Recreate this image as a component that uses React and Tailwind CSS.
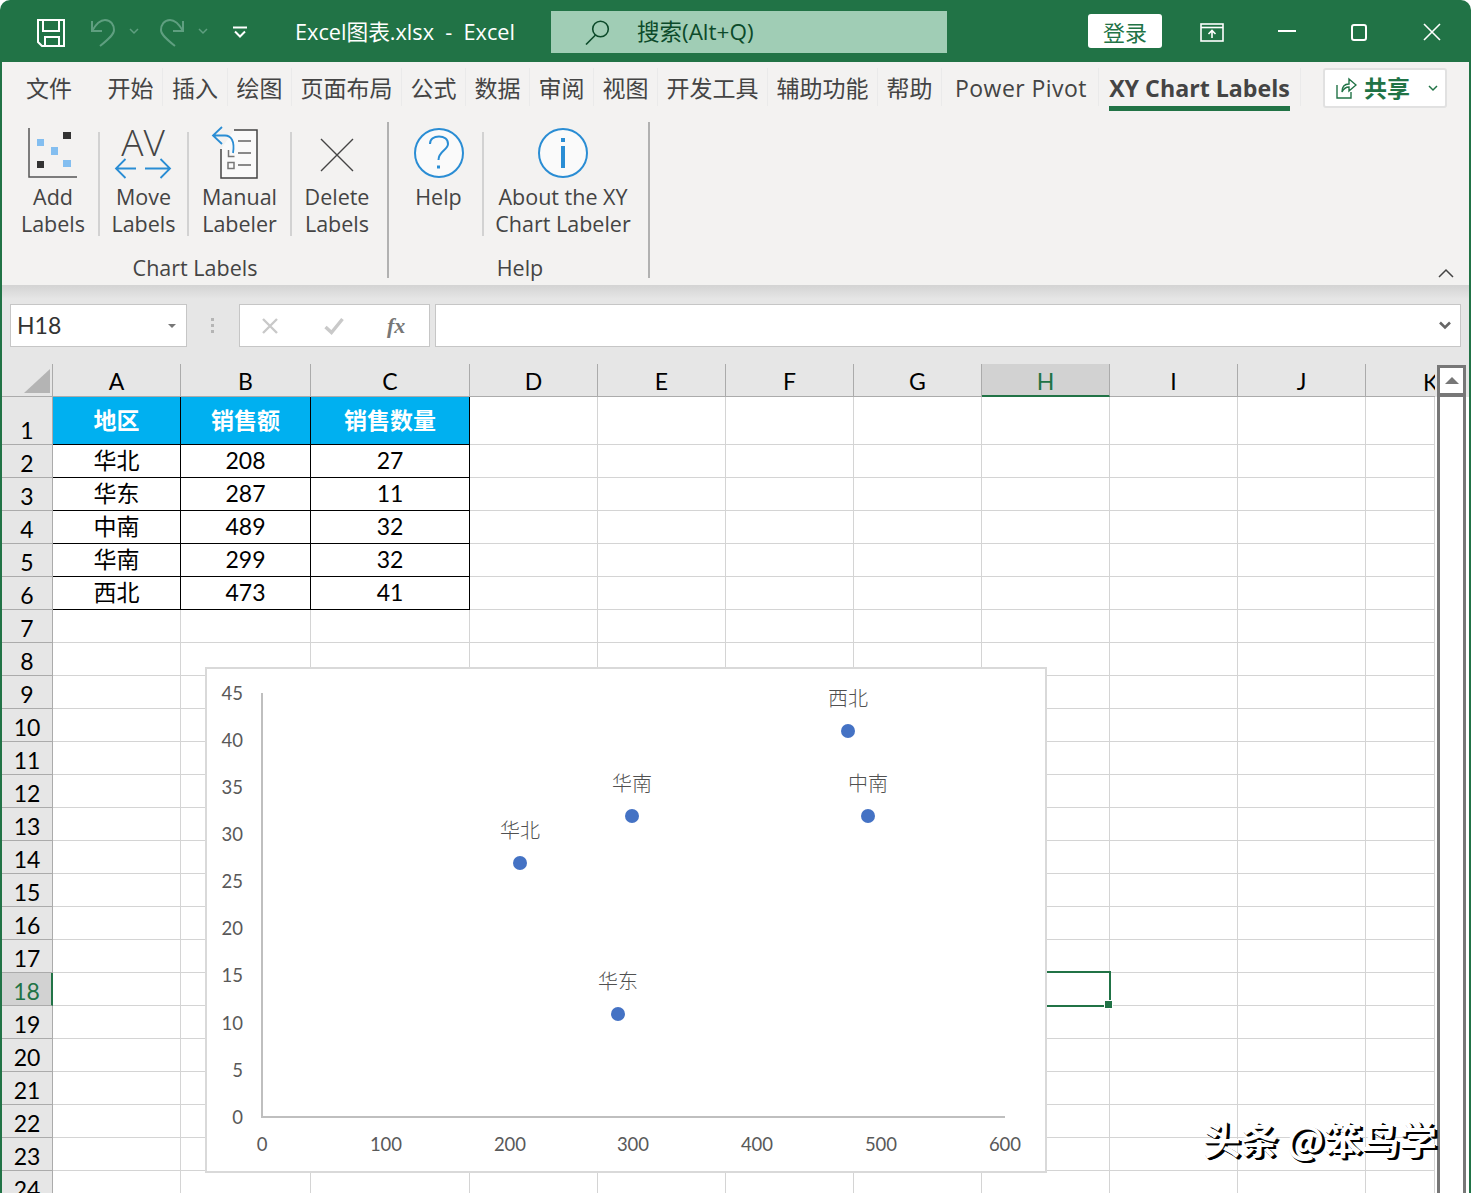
import React from "react";

const green = "#217346";

const tabs = [
  ["文件", "w-[97px] pr-[3px]"],
  ["开始", "w-[64px] border-r"],
  ["插入", "w-[65px] border-r"],
  ["绘图", "w-[64px] border-r"],
  ["页面布局", "w-[110px] border-r"],
  ["公式", "w-[64px] border-r"],
  ["数据", "w-[64px] border-r"],
  ["审阅", "w-[64px] border-r"],
  ["视图", "w-[64px] border-r"],
  ["开发工具", "w-[110px] border-r"],
  ["辅助功能", "w-[110px] border-r"],
  ["帮助", "w-[64px] border-r"],
  ["Power Pivot", "w-[157px] border-r pl-[2px] tracking-[0.45px]"],
];

const columns = ["A", "B", "C", "D", "E", "F", "G", "H", "I", "J", "K"];

const tableRows = [
  ["地区", "销售额", "销售数量"],
  ["华北", "208", "27"],
  ["华东", "287", "11"],
  ["中南", "489", "32"],
  ["华南", "299", "32"],
  ["西北", "473", "41"],
];

const rowNumbers = Array.from({ length: 24 }, (_, i) => i + 1);

const yTicks = [
  ["45", 693],
  ["40", 740],
  ["35", 787],
  ["30", 834],
  ["25", 881],
  ["20", 928],
  ["15", 975],
  ["10", 1023],
  ["5", 1070],
  ["0", 1117],
];

const xTicks = [
  ["0", 262],
  ["100", 386],
  ["200", 510],
  ["300", 633],
  ["400", 757],
  ["500", 881],
  ["600", 1005],
];

const points = [
  ["华北", 520, 863],
  ["华东", 618, 1014],
  ["中南", 868, 816],
  ["华南", 632, 816],
  ["西北", 848, 731],
];

const Sep = () => <div className="mt-[16px] h-[104px] w-[2px] shrink-0 bg-[#d2d2d2]"></div>;
const GroupSep = () => <div className="mt-[6px] h-[156px] w-[2px] shrink-0 bg-[#b1b1b1]"></div>;

const RibbonButton = ({ width, icon, lines }) => (
  <div className={`${width} flex shrink-0 flex-col items-center`}>
    <div className="flex h-[67px] w-full justify-center pt-[10px]">{icon}</div>
    {lines.map((l) => (
      <div key={l} className="whitespace-nowrap text-[21.5px] leading-[27px] text-[#444444]">
        {l}
      </div>
    ))}
  </div>
);

const TitleBar = () => (
  <div className="flex h-[62px] shrink-0 items-center pl-[37px] pt-[2px]">
    <svg width="28" height="28" viewBox="0 0 28 28" fill="none" stroke="white" strokeWidth="2" className="mt-[2px] shrink-0">
      <path d="M1 1H27V27H5L1 23Z" />
      <path d="M6 1V12H22V1" />
      <path d="M8 27V18H22V27" />
    </svg>
    <svg width="25" height="28" viewBox="0 0 25 28" fill="none" stroke="#5f9f80" strokeWidth="2" className="ml-[25px] mt-[2px] shrink-0">
      <path d="M2 2V12H12" />
      <path d="M2 12C6 5 10 1 15 1C21 1 24 6 24 11C24 15 20 19 10 27" />
    </svg>
    <svg width="12" height="8" viewBox="0 0 12 8" fill="none" stroke="#5f9f80" strokeWidth="1.5" className="ml-[13px] shrink-0">
      <path d="M2 1L6 5L10 1" />
    </svg>
    <svg width="26" height="28" viewBox="0 0 26 28" fill="none" stroke="#5f9f80" strokeWidth="2" className="ml-[19px] mt-[2px] shrink-0">
      <path d="M24 2V12H14" />
      <path d="M24 12C20 5 16 1 11 1C5 1 2 6 2 11C2 15 6 19 16 27" />
    </svg>
    <svg width="12" height="8" viewBox="0 0 12 8" fill="none" stroke="#5f9f80" strokeWidth="1.5" className="ml-[12px] shrink-0">
      <path d="M2 1L6 5L10 1" />
    </svg>
    <svg width="14" height="13" viewBox="0 0 14 13" fill="none" stroke="white" strokeWidth="2" className="ml-[24px] shrink-0">
      <path d="M0 1.5H14" />
      <path d="M2 5.5L7 10.5L12 5.5" />
    </svg>
    <div className="ml-[48px] w-[256px] shrink-0 whitespace-pre text-[21.7px] text-white">Excel图表.xlsx  -  Excel</div>
    <div className="flex h-[42px] w-[396px] shrink-0 items-center bg-[#a0cdb5] pl-[34px] text-[22.5px] text-[#0c4a2a]">
      <svg width="25" height="25" viewBox="0 0 25 25" fill="none" stroke="#0c4a2a" strokeWidth="1.6">
        <circle cx="15.5" cy="9" r="7.8" />
        <path d="M10.5 15L1 24.5" />
      </svg>
      <span className="ml-[27px]">搜索(Alt+Q)</span>
    </div>
    <div className="mb-[2px] ml-[141px] flex h-[34px] w-[74px] shrink-0 items-center justify-center rounded-[3px] bg-white pt-[2px] text-[22px] text-[#217346]">
      登录
    </div>
    <svg width="24" height="19" viewBox="0 0 24 19" fill="none" stroke="white" strokeWidth="1.6" className="ml-[38px] shrink-0">
      <rect x="1" y="1" width="22" height="17" />
      <path d="M1 4.5H23" />
      <path d="M12 15V7.5M8.5 11L12 7.5L15.5 11" />
    </svg>
    <div className="mb-[2px] ml-[54px] h-[2px] w-[18px] shrink-0 bg-white"></div>
    <div className="ml-[55px] h-[17px] w-[16px] shrink-0 rounded-[3px] border-2 border-white"></div>
    <svg width="18" height="18" viewBox="0 0 18 18" fill="none" stroke="white" strokeWidth="1.6" className="ml-[56px] shrink-0">
      <path d="M1 1L17 17M17 1L1 17" />
    </svg>
  </div>
);

const TabBar = () => (
  <div className="flex h-[54px] shrink-0 items-start pt-[6px]">
    {tabs.map(([label, cls]) => (
      <div key={label} className={`${cls} h-[38px] shrink-0 whitespace-nowrap border-[#eaeaea] pt-[2px] text-center text-[23px] leading-[36px] text-[#444444]`}>
        {label}
      </div>
    ))}
    <div className="flex h-[38px] w-[202px] shrink-0 flex-col items-center border-r border-[#eaeaea]">
      <div className="whitespace-nowrap pt-[2px] text-[23.2px] font-bold leading-[36px] text-[#444444]">XY Chart Labels</div>
      <div className="h-[5px] w-[181px] shrink-0 bg-[#217346]"></div>
    </div>
    <div className="ml-[22px] flex h-[40px] w-[124px] shrink-0 items-center rounded-[3px] border-2 border-[#e1e1e1] bg-white pl-[11px]">
      <svg width="21" height="22" viewBox="0 0 21 22" fill="none" stroke={green} strokeWidth="1.4">
        <path d="M1 8V21H15V15" />
        <path d="M6 15C6 9 9 7 13 7V2L20 8L13 14V10C10 10 8 11 6 15Z" />
      </svg>
      <span className="ml-[7px] text-[23px] font-bold text-[#217346]">共享</span>
      <svg width="10" height="7" viewBox="0 0 10 7" fill="none" stroke={green} strokeWidth="1.5" className="ml-[18px]">
        <path d="M1 1L5 5L9 1" />
      </svg>
    </div>
  </div>
);

const Ribbon = () => (
  <div className="relative flex h-[169px] shrink-0">
    <div className="flex w-[385px] shrink-0 flex-col">
      <div className="flex h-[136px] pl-[6px]">
        <RibbonButton
          width="w-[90px]"
          lines={["Add", "Labels"]}
          icon={
            <svg width="50" height="51" viewBox="28 127 50 51" className="mt-[1px]">
              <path d="M29 128V177H77" fill="none" stroke="#555555" strokeWidth="1.5" />
              <rect x="63" y="132" width="8" height="7" fill="#333333" />
              <rect x="37" y="139" width="7" height="7" fill="#83bef0" />
              <rect x="51" y="147" width="7" height="8" fill="#83bef0" />
              <rect x="37" y="161" width="7" height="7" fill="#333333" />
              <rect x="63" y="160" width="8" height="7" fill="#83bef0" />
            </svg>
          }
        />
        <Sep />
        <RibbonButton
          width="w-[87px]"
          lines={["Move", "Labels"]}
          icon={
            <svg width="58" height="54" viewBox="114 125 58 54" className="mr-[2px] overflow-visible">
              <text x="143" y="155" textAnchor="middle" fontSize="37" fill="#444444" fontFamily="'Open Sans', sans-serif" fontWeight="300">AV</text>
              <path d="M116 167.5H136M125.5 158L116 167.5L125.5 177" fill="none" stroke="#2a8dd4" strokeWidth="1.8" />
              <path d="M145 167.5H170M160.5 158L170 167.5L160.5 177" fill="none" stroke="#2a8dd4" strokeWidth="1.8" />
            </svg>
          }
        />
        <Sep />
        <RibbonButton
          width="w-[101px]"
          lines={["Manual", "Labeler"]}
          icon={
            <svg width="48" height="54" viewBox="210 125 48 54" className="mr-[10px]">
              <path d="M233 129H256V177H220V148" fill="#fafafa" stroke="#444444" strokeWidth="1.5" />
              <path d="M237 140H250M237 152H250M237 164H250" stroke="#666666" strokeWidth="1.4" fill="none" />
              <path d="M227.5 149V155.5H233.5" stroke="#777777" strokeWidth="1.5" fill="none" />
              <rect x="227" y="161.5" width="6" height="6" stroke="#777777" strokeWidth="1.5" fill="none" />
              <path d="M221 126L212 134.5L221 143M212 134.5H224C230 134.5 234 140 232 152" stroke="#2a8dd4" strokeWidth="1.8" fill="none" />
            </svg>
          }
        />
        <Sep />
        <RibbonButton
          width="w-[90px]"
          lines={["Delete", "Labels"]}
          icon={
            <svg width="34" height="34" viewBox="0 0 34 34" fill="none" stroke="#444444" strokeWidth="1.4" className="mt-[12px]">
              <path d="M1 1L33 33M33 1L1 33" />
            </svg>
          }
        />
      </div>
      <div className="pl-[1px] text-center text-[21.5px] leading-[32px] text-[#444444]">Chart Labels</div>
    </div>
    <GroupSep />
    <div className="flex w-[259px] shrink-0 flex-col">
      <div className="flex h-[136px] pl-[6px]">
        <RibbonButton
          width="w-[87px]"
          lines={["Help"]}
          icon={
            <svg width="50" height="50" viewBox="0 0 50 50" fill="none" className="mt-[2px]">
              <circle cx="25" cy="25" r="24" fill="#fafafa" stroke="#2a8dd4" strokeWidth="2" />
              <path d="M16 16C16 11 20 8.5 25 8.5C30 8.5 34 11 34 16C34 22 24.5 23 24.5 32" stroke="#2a8dd4" strokeWidth="2" />
              <rect x="23" y="37.5" width="3" height="3" fill="#2a8dd4" />
            </svg>
          }
        />
        <Sep />
        <RibbonButton
          width="w-[158px]"
          lines={["About the XY", "Chart Labeler"]}
          icon={
            <svg width="50" height="50" viewBox="0 0 50 50" fill="none" className="mt-[2px]">
              <circle cx="25" cy="25" r="24" fill="#fafafa" stroke="#2a8dd4" strokeWidth="2" />
              <rect x="23" y="18" width="4" height="22" fill="#2a8dd4" />
              <rect x="23" y="10" width="4" height="4" fill="#2a8dd4" />
            </svg>
          }
        />
      </div>
      <div className="pl-[3px] text-center text-[21.5px] leading-[32px] text-[#444444]">Help</div>
    </div>
    <GroupSep />
    <svg width="16" height="10" viewBox="0 0 16 10" fill="none" stroke="#444444" strokeWidth="1.5" className="absolute bottom-[7px] right-[15px]">
      <path d="M1 9L8 2L15 9" />
    </svg>
  </div>
);

const FormulaBar = () => (
  <div className="flex h-[79px] shrink-0 bg-[linear-gradient(#d3d3d3,#e6e6e6_14px)] pb-[17px] pl-[8px] pr-[8px] pt-[19px]">
    <div className="flex w-[177px] shrink-0 items-center justify-between border border-[#c6c6c6] bg-white pl-[6px] pr-[10px] text-[23px] text-[#333333] [font-family:Lato,sans-serif]">
      <span>H18</span>
      <span className="h-0 w-0 border-x-[4px] border-t-[4px] border-x-transparent border-t-[#777777]"></span>
    </div>
    <div className="ml-[24px] flex w-[3px] shrink-0 flex-col justify-center gap-[3px]">
      <span className="h-[3px] w-[3px] bg-[#b5b5b5]"></span>
      <span className="h-[3px] w-[3px] bg-[#b5b5b5]"></span>
      <span className="h-[3px] w-[3px] bg-[#b5b5b5]"></span>
    </div>
    <div className="ml-[25px] flex w-[191px] shrink-0 items-center border border-[#c6c6c6] bg-white pl-[21px]">
      <svg width="18" height="18" viewBox="0 0 18 18" fill="none" stroke="#c9c9c9" strokeWidth="2.4">
        <path d="M2 2L16 16M16 2L2 16" />
      </svg>
      <svg width="20" height="18" viewBox="0 0 20 18" fill="none" stroke="#c9c9c9" strokeWidth="3.4" className="ml-[45px]">
        <path d="M1.5 10L7.5 15.5L18.5 2" />
      </svg>
      <span className="ml-[43px] text-[22px] font-bold italic text-[#777777] [font-family:'Liberation_Serif',serif]">fx</span>
    </div>
    <div className="ml-[5px] flex flex-1 items-center justify-end border border-[#c6c6c6] bg-white pr-[9px]">
      <svg width="12" height="9" viewBox="0 0 12 9" fill="none" stroke="#666666" strokeWidth="2.6">
        <path d="M1 1.5L6 6.5L11 1.5" />
      </svg>
    </div>
  </div>
);

const Chart = () => (
  <div className="absolute left-[203px] top-[303px] h-[506px] w-[842px] border-2 border-[#d9d9d9] bg-white">
    <svg viewBox="207 669 838 502" className="block h-full w-full">
      <path d="M262 693V1117H1005" fill="none" stroke="#bfbfbf" strokeWidth="2" />
      {yTicks.map(([t, y]) => (
        <text key={t} x="243" y={y} textAnchor="end" dominantBaseline="central" fontSize="18.5" fill="#595959" fontFamily="Lato, sans-serif">
          {t}
        </text>
      ))}
      {xTicks.map(([t, x]) => (
        <text key={t} x={x} y="1144" textAnchor="middle" dominantBaseline="central" fontSize="18.5" fill="#595959" fontFamily="Lato, sans-serif">
          {t}
        </text>
      ))}
      {points.map(([name, x, y]) => (
        <g key={name}>
          <circle cx={x} cy={y} r="7" fill="#4472c4" />
          <text x={x} y={y - 33.5} textAnchor="middle" dominantBaseline="central" fontSize="20" fill="#505050" fontFamily="'Noto Sans CJK SC', sans-serif" fontWeight="300">
            {name}
          </text>
        </g>
      ))}
    </svg>
  </div>
);

const Sheet = () => (
  <div className="relative min-h-0 flex-1 overflow-hidden [font-family:Lato,'Noto_Sans_CJK_SC',sans-serif]">
    <div className="flex h-full">
      <div className="grid shrink-0 auto-rows-[33px] grid-cols-[51px_128px_130px_159px_128px_128px_128px_128px_128px_128px_128px_69px] grid-rows-[33px_48px] bg-white text-[23px] text-black">
        <div className="flex items-end justify-end border-b border-r border-[#ababab] bg-[#e6e6e6] pb-[3px] pr-[2px]">
          <svg width="26" height="24" viewBox="0 0 26 24">
            <path d="M26 0V24H0Z" fill="#b4b4b4" />
          </svg>
        </div>
        {columns.map((c) => (
          <div
            key={c}
            className={
              c === "H"
                ? "flex items-end justify-center border-b-2 border-r border-[#217346] border-r-[#ababab] bg-[#d2d2d2] leading-[28px] text-[#217346]"
                : c === "K"
                  ? "overflow-hidden border-b border-[#ababab] bg-[#e6e6e6] pl-[57px] pt-[3px] leading-[30px]"
                  : "flex items-end justify-center border-b border-r border-[#ababab] bg-[#e6e6e6] leading-[30px]"
            }
          >
            {c}
          </div>
        ))}
        {rowNumbers.map((r) => (
          <React.Fragment key={r}>
            <div
              className={
                r === 18
                  ? "flex items-end justify-center border-b border-r-2 border-[#ababab] border-r-[#217346] bg-[#d2d2d2] leading-[28px] text-[#217346]"
                  : "flex items-end justify-center border-b border-r border-[#ababab] bg-[#e6e6e6] leading-[28px]"
              }
            >
              {r}
            </div>
            {columns.map((c, i) => {
              const value = r <= 6 && i < 3 ? tableRows[r - 1][i] : null;
              if (value && r === 1) {
                return (
                  <div key={c} className="flex items-center justify-center border-b border-r border-black bg-[#00b0f0] font-bold text-white">
                    {value}
                  </div>
                );
              }
              if (value) {
                return (
                  <div key={c} className="flex items-center justify-center border-b border-r border-black pb-[2px]">
                    {value}
                  </div>
                );
              }
              return <div key={c} className="border-b border-r border-[#d4d4d4]"></div>;
            })}
          </React.Fragment>
        ))}
      </div>
      <div className="flex w-[34px] shrink-0 flex-col">
        <div className="h-[33px] shrink-0 bg-[#e6e6e6] pl-[2px] pr-[3px] pt-[1px]">
          <div className="flex h-[32px] items-center justify-center border-[3px] border-b-[4px] border-[#777777] bg-white">
            <span className="h-0 w-0 border-x-[7px] border-b-[7px] border-x-transparent border-b-[#777777]"></span>
          </div>
        </div>
        <div className="flex-1 bg-white pl-[2px] pr-[3px]">
          <div className="h-full border-x-[3px] border-[#777777] bg-white"></div>
        </div>
      </div>
    </div>

    <div className="absolute left-[980px] top-[607px] h-[36px] w-[129px] border-2 border-[#217346]"></div>
    <div className="absolute left-[1102px] top-[636px] h-[9px] w-[9px] border border-white bg-[#217346]"></div>
    <Chart />
    <div className="absolute left-[1201px] top-[750px] whitespace-pre text-[37.5px] font-bold leading-[48px] text-white [font-family:'Noto_Sans_CJK_SC',sans-serif] [text-shadow:1px_1px_0_#000,2px_2px_0_#000,3px_2px_0_#000]">
      头条 @笨鸟学
    </div>
  </div>
);

export default function App() {
  return (
    <div className="flex h-[1193px] w-[1471px] flex-col overflow-hidden rounded-t-[10px] bg-[#217346] [font-family:'Open_Sans','Noto_Sans_CJK_SC',sans-serif]">
      <TitleBar />
      <div className="mx-[2px] flex min-h-0 flex-1 flex-col bg-[#f3f2f1]">
        <TabBar />
        <Ribbon />
        <FormulaBar />
        <Sheet />
      </div>
    </div>
  );
}
